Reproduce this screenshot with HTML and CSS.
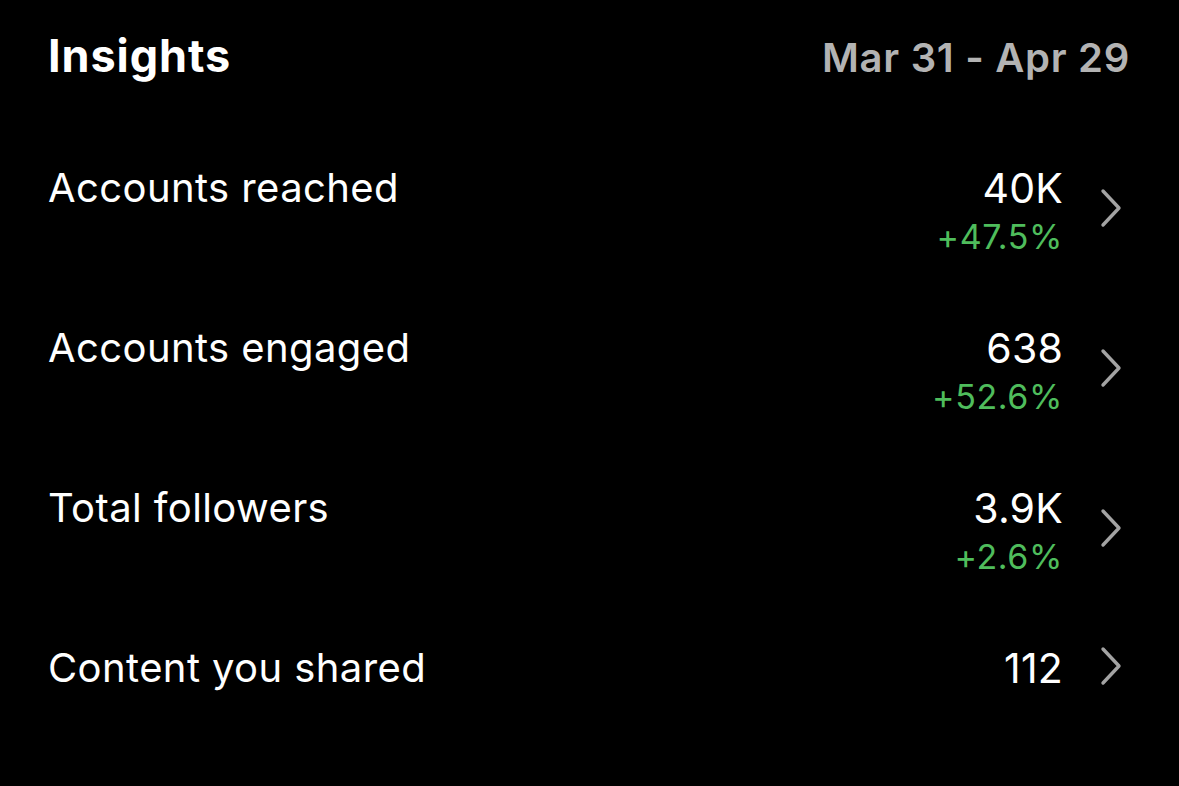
FILE: index.html
```html
<!DOCTYPE html>
<html>
<head>
<meta charset="utf-8">
<link rel="stylesheet" href="styles.css">
</head>
<body>
<div class="page">
  <div class="header">
    <h1 class="title">Insights</h1>
    <div class="date">Mar 31 - Apr 29</div>
  </div>
  <div class="list">
    <div class="row">
      <div class="label">Accounts reached</div>
      <div class="right">
        <div class="values">
          <div class="value">40K</div>
          <div class="delta">+47.5%</div>
        </div>
        <svg class="chev" viewBox="0 0 22 40" width="22" height="40"><path d="M3 3 L19 20 L3 37" /></svg>
      </div>
    </div>
    <div class="row">
      <div class="label">Accounts engaged</div>
      <div class="right">
        <div class="values">
          <div class="value">638</div>
          <div class="delta">+52.6%</div>
        </div>
        <svg class="chev" viewBox="0 0 22 40" width="22" height="40"><path d="M3 3 L19 20 L3 37" /></svg>
      </div>
    </div>
    <div class="row">
      <div class="label">Total followers</div>
      <div class="right">
        <div class="values">
          <div class="value">3.9K</div>
          <div class="delta">+2.6%</div>
        </div>
        <svg class="chev" viewBox="0 0 22 40" width="22" height="40"><path d="M3 3 L19 20 L3 37" /></svg>
      </div>
    </div>
    <div class="row">
      <div class="label">Content you shared</div>
      <div class="right">
        <div class="values">
          <div class="value">112</div>
        </div>
        <svg class="chev" viewBox="0 0 22 40" width="22" height="40"><path d="M3 3 L19 20 L3 37" /></svg>
      </div>
    </div>
  </div>
</div>
</body>
</html>
```

FILE: styles.css
```css
html, body {
  margin: 0;
  padding: 0;
  background: #000;
}
body {
  width: 1179px;
  height: 786px;
  overflow: hidden;
  font-family: Inter, "Noto Sans", sans-serif;
  color: #fff;
}
.page {
  padding: 29px 51px 0 48px;
}
.header {
  display: flex;
  justify-content: space-between;
  align-items: baseline;
}
.title {
  margin: 0;
  font-size: 45px;
  line-height: 53px;
  font-weight: 700;
  letter-spacing: 0.9px;
}
.date {
  margin-right: -2px;
  font-size: 40px;
  line-height: 53px;
  font-weight: 600;
  color: #b3b3b3;
  letter-spacing: 0.7px;
}
.list {
  margin-top: 80px;
}
.row {
  display: flex;
  justify-content: space-between;
  align-items: flex-start;
  min-height: 160px;
}
.label {
  font-size: 40px;
  line-height: 48px;
  font-weight: 400;
  letter-spacing: 0.4px;
}
.right {
  display: flex;
  align-items: center;
}
.values {
  text-align: right;
}
.value {
  font-size: 41px;
  line-height: 48px;
  font-weight: 400;
  letter-spacing: 0.2px;
}
.delta {
  margin-top: 6px;
  font-size: 34px;
  line-height: 38px;
  color: #4fbd5c;
  letter-spacing: 0.6px;
}
.chev {
  margin-left: 37px;
  margin-right: 6px;
  margin-top: -4px;
  fill: none;
  stroke: #a3a3a3;
  stroke-width: 3.4;
  stroke-linecap: round;
  stroke-linejoin: round;
}
```
